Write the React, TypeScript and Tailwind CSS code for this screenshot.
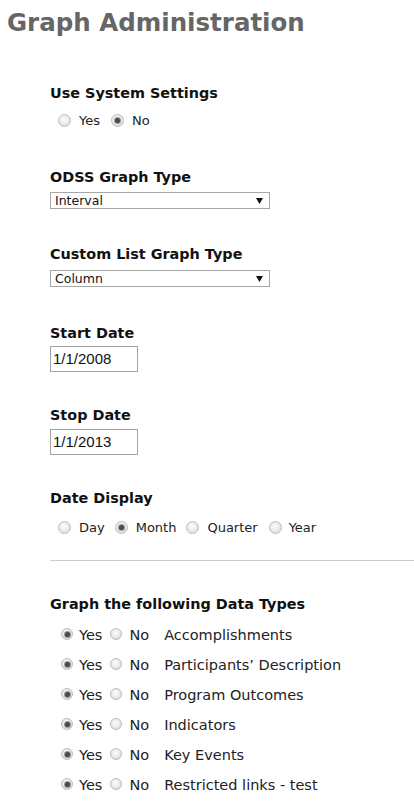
import React from "react";

const font = { fontFamily: '"DejaVu Sans", Verdana, sans-serif' };

function Radio({ checked, size = 13 }: { checked?: boolean; size?: number }) {
  return (
    <span
      className={`relative inline-flex shrink-0 items-center justify-center rounded-full border border-[#bdbdbd] bg-[radial-gradient(circle_at_45%_40%,#fdfdfd_0%,#ececec_45%,#d2d2d2_100%)] mb-[2px] ${
        size === 13 ? "h-[13px] w-[13px]" : "h-[12px] w-[12px]"
      }`}
    >
      {checked && (
        <span className="h-[5px] w-[5px] rounded-full bg-[#4a4a4a] shadow-[0_0_0_1px_#9a9a9a]" />
      )}
    </span>
  );
}

function Label({ children, className = "" }: { children: React.ReactNode; className?: string }) {
  return (
    <div className={`h-[18px] text-[14.4px] font-bold leading-[18px] text-[#111] ${className}`}>
      {children}
    </div>
  );
}

function Select({ value, className = "" }: { value: string; className?: string }) {
  return (
    <div
      className={`flex h-[17px] w-[220px] items-center justify-between border border-[#a8a8a8] bg-white pl-[4px] pr-[6px] text-[12.5px] leading-[15px] text-[#111] ${className}`}
    >
      <span>{value}</span>
      <svg width="7" height="6" viewBox="0 0 7 6">
        <polygon points="0,0 7,0 3.5,6" fill="#111" />
      </svg>
    </div>
  );
}

function DateInput({ value, className = "" }: { value: string; className?: string }) {
  return (
    <div
      className={`flex h-[26px] w-[88px] items-center border border-[#a3a3a3] bg-white pl-[2px] text-[15px] leading-[18px] text-[#111] ${className}`}
      style={{ fontFamily: '"Liberation Sans", Arial, sans-serif' }}
    >
      {value}
    </div>
  );
}

const dataTypes = [
  "Accomplishments",
  "Participants\u2019 Description",
  "Program Outcomes",
  "Indicators",
  "Key Events",
  "Restricted links - test",
];

export default function App() {
  return (
    <div className="min-h-[806px] w-[414px] overflow-hidden bg-white" style={font}>
      <h1 className="mt-[8px] h-[30px] pl-[7px] text-[24.5px] font-bold leading-[30px] text-[#666]">
        Graph Administration
      </h1>

      <div className="pl-[50px]">
        <Label className="mt-[46px]">Use System Settings</Label>
        <div className="mt-[11px] flex h-[16px] items-center pl-[8px] text-[13px] leading-[16px] text-[#222]">
          <Radio />
          <span className="ml-[8px]">Yes</span>
          <span className="ml-[11px] inline-flex">
            <Radio checked />
          </span>
          <span className="ml-[8px]">No</span>
        </div>

        <Label className="mt-[39px]">ODSS Graph Type</Label>
        <Select className="mt-[6px]" value="Interval" />

        <Label className="mt-[36px]">Custom List Graph Type</Label>
        <Select className="mt-[7px]" value="Column" />

        <Label className="mt-[37px]">Start Date</Label>
        <DateInput className="mt-[4px]" value="1/1/2008" />

        <Label className="mt-[34px]">Stop Date</Label>
        <DateInput className="mt-[5px]" value="1/1/2013" />

        <Label className="mt-[34px]">Date Display</Label>
        <div className="mt-[13px] flex h-[16px] items-center pl-[8px] text-[13px] leading-[16px] text-[#222]">
          <Radio />
          <span className="ml-[8px]">Day</span>
          <span className="ml-[10px] inline-flex">
            <Radio checked />
          </span>
          <span className="ml-[8px]">Month</span>
          <span className="ml-[10px] inline-flex">
            <Radio />
          </span>
          <span className="ml-[8px]">Quarter</span>
          <span className="ml-[11px] inline-flex">
            <Radio />
          </span>
          <span className="ml-[7px]">Year</span>
        </div>

        <div className="mt-[24px] h-px bg-[#cccccc]" />

        <Label className="mt-[34px]">Graph the following Data Types</Label>
        <div className="mt-[13px] flex flex-col gap-[12px] pl-[11px]">
          {dataTypes.map((t) => (
            <div key={t} className="flex h-[18px] items-center text-[14.5px] leading-[18px] text-[#222]">
              <Radio checked size={12} />
              <span className="ml-[6px]">Yes</span>
              <span className="ml-[8px] inline-flex">
                <Radio size={12} />
              </span>
              <span className="ml-[7px]">No</span>
              <span className="ml-[15px]">{t}</span>
            </div>
          ))}
        </div>
      </div>
    </div>
  );
}
